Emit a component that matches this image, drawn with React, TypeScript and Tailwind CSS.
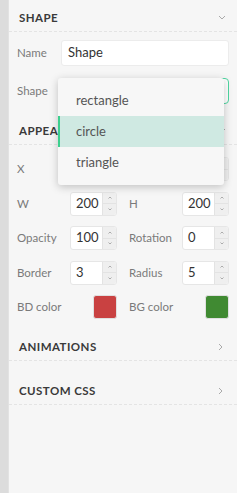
import React from "react";

const font = { fontFamily: 'Lato, "Open Sans", sans-serif' };

function Spin() {
  return (
    <div className="flex w-[14px] flex-col border-l border-[#e3e3e3] bg-[#efefef]">
      <div className="flex flex-1 items-center justify-center border-b border-[#e3e3e3]">
        <svg width="4" height="3" viewBox="0 0 4 3"><path d="M0.5 2.5 L2 1 L3.5 2.5" fill="none" stroke="#999" strokeWidth="0.8" /></svg>
      </div>
      <div className="flex flex-1 items-center justify-center">
        <svg width="4" height="3" viewBox="0 0 4 3"><path d="M0.5 0.5 L2 2 L3.5 0.5" fill="none" stroke="#999" strokeWidth="0.8" /></svg>
      </div>
    </div>
  );
}

function Num({ v }: { v: string }) {
  return (
    <div className="flex h-[24px] w-[47px] overflow-hidden rounded-[3px] border border-[#e6e6e6] bg-white">
      <div className="flex flex-1 items-center pl-[5px] text-[13px] text-[#333]">{v}</div>
      <Spin />
    </div>
  );
}

function Field({ label, v, color }: { label: string; v?: string; color?: string }) {
  return (
    <div className="flex h-[24px] items-center">
      <div className="flex-1 text-[11.5px] text-[#7a7a7a]">{label}</div>
      {color ? (
        <div className={`h-[24px] w-[24px] rounded-[3px] border border-[#e0e0e0] ${color}`} />
      ) : (
        <Num v={v || ""} />
      )}
    </div>
  );
}

function Header({ title, open }: { title: string; open?: boolean }) {
  return (
    <div className="mt-[4px] flex h-[28px] items-center justify-between border-b border-dashed border-[#e4e4e4] pl-[10px] pr-[11px]">
      <span className="text-[11.5px] font-bold tracking-[0.04em] text-[#3a3a3a]">{title}</span>
      {open ? (
        <svg width="8" height="5" viewBox="0 0 8 5"><path d="M1 1 L4 4 L7 1" fill="none" stroke="#aaa" strokeWidth="1" /></svg>
      ) : (
        <svg width="5" height="8" viewBox="0 0 5 8" className="mr-[3px]"><path d="M1 1 L4 4 L1 7" fill="none" stroke="#aaa" strokeWidth="1" /></svg>
      )}
    </div>
  );
}

export default function App() {
  return (
    <div className="flex h-[493px] w-[237px] overflow-hidden bg-[#f6f6f6]" style={font}>
      <div className="w-[9px] shrink-0 border-r border-[#e2e2e2] bg-[#dcdcdc]" />
      <div className="relative flex-1">
        <Header title="SHAPE" open />
        <div className="flex flex-col gap-[12px] pb-[9px] pl-[8px] pr-[8px] pt-[8px]">
          <div className="flex h-[26px] items-center">
            <div className="w-[44px] text-[11.5px] text-[#7a7a7a]">Name</div>
            <div className="flex h-[26px] flex-1 items-center rounded-[3px] border border-[#ececec] bg-white pl-[6px] text-[13px] text-[#333]">Shape</div>
          </div>
          <div className="flex h-[26px] items-center">
            <div className="w-[44px] text-[11.5px] text-[#7a7a7a]">Shape</div>
            <div className="flex h-[26px] flex-1 items-center rounded-[4px] border border-[#4fd6a2] bg-white pl-[6px] text-[13px] text-[#333]">circle</div>
          </div>
        </div>
        <Header title="APPEARANCE" open />
        <div className="grid grid-cols-2 gap-x-[12px] gap-y-[10.5px] pb-[10px] pl-[8px] pr-[8px] pt-[12px]">
          <Field label="X" v="0" />
          <Field label="Y" v="0" />
          <Field label="W" v="200" />
          <Field label="H" v="200" />
          <Field label="Opacity" v="100" />
          <Field label="Rotation" v="0" />
          <Field label="Border" v="3" />
          <Field label="Radius" v="5" />
          <Field label="BD color" color="bg-[#c94141]" />
          <Field label="BG color" color="bg-[#408a32]" />
        </div>
        <Header title="ANIMATIONS" />
        <div className="h-[12px]" />
        <Header title="CUSTOM CSS" />

        <div className="absolute left-[49px] top-[78px] w-[166px] rounded-[3px] bg-[#f7f7f7] py-[7px] shadow-[0_2px_8px_rgba(0,0,0,0.22)]">
          <div className="flex h-[31px] items-center pl-[18px] text-[13px] text-[#555]">rectangle</div>
          <div className="flex h-[31px] items-center border-l-2 border-[#3ccf8e] bg-[#cfe9e2] pl-[16px] text-[13px] text-[#555]">circle</div>
          <div className="flex h-[31px] items-center pl-[18px] text-[13px] text-[#555]">triangle</div>
        </div>
      </div>
    </div>
  );
}
